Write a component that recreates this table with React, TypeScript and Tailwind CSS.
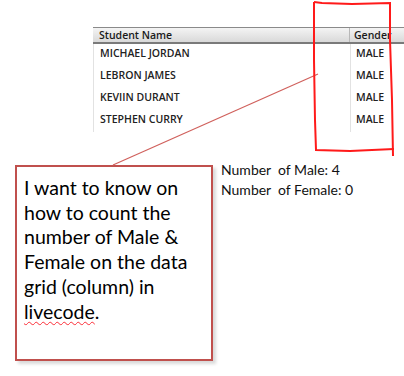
import React from 'react';

const students = [
  { name: 'MICHAEL JORDAN', gender: 'MALE' },
  { name: 'LEBRON JAMES', gender: 'MALE' },
  { name: 'KEVIIN DURANT', gender: 'MALE' },
  { name: 'STEPHEN CURRY', gender: 'MALE' },
];

const gridFont = { fontFamily: '"Open Sans", "DejaVu Sans", sans-serif' };
const noteFont = { fontFamily: 'Lato, "Open Sans", sans-serif' };

export default function App() {
  const males = students.filter(s => s.gender === 'MALE').length;
  const females = students.filter(s => s.gender === 'FEMALE').length;

  return (
    <div className="relative w-[404px] h-[376px] bg-white overflow-hidden">
      {/* data grid */}
      <div className="ml-[93px] mt-[27px] w-[311px]" style={gridFont}>
        <div className="flex h-[17px] border-t border-[#8a8a8a] border-b-2 border-b-[#7a7a7a] bg-gradient-to-b from-[#f4f4f4] to-[#d9d9d9] text-[10.5px] font-semibold text-[#1a1a1a]">
          <div className="w-[257px] pl-[6px] leading-[15px] border-r border-[#b8b8b8]">Student Name</div>
          <div className="flex-1 pl-[4px] leading-[15px]">Gender</div>
        </div>
        <div className="flex border-l border-[#e2e2e2]">
          <div className="w-[256px]">
            {students.map(s => (
              <div key={s.name} className="h-[22px] pl-[6px] leading-[18px] text-[10.5px] font-semibold text-[#222]">{s.name}</div>
            ))}
          </div>
          <div className="pl-[5px] border-l border-[#e2e2e2]">
            {students.map(s => (
              <div key={s.name} className="h-[22px] leading-[18px] text-[10.5px] font-semibold text-[#222]">{s.gender}</div>
            ))}
          </div>
        </div>
      </div>

      {/* callout + counts */}
      <div className="flex mt-[28px]">
        <div
          className="ml-[15px] mt-[5px] w-[198px] h-[196px] border-2 border-[#c0504d] bg-white shadow-[3px_3px_3px_rgba(0,0,0,0.15)] pl-[7px] pr-[4px] pt-[9px] text-[19.5px] leading-[24.7px] text-black"
          style={noteFont}
        >
          I want to know on how to count the number of Male &amp; Female on the data grid (column) in{' '}
          <span className="underline decoration-wavy decoration-red-500 decoration-1 underline-offset-2">livecode</span>.
        </div>
        <div className="ml-[8px] text-[14px] leading-[20px] text-[#111]" style={noteFont}>
          <div>Number&nbsp; of Male: {males}</div>
          <div>Number&nbsp; of Female: {females}</div>
        </div>
      </div>

      {/* hand-drawn annotations */}
      <svg className="absolute inset-0 pointer-events-none" width="404" height="376">
        <line x1="113" y1="165" x2="318" y2="74" stroke="#d0605c" strokeWidth="1.2" />
        <path d="M314 2 L322 3 L352 4 L390 3 L390 40 L392 100 L393 156" fill="none" stroke="#ff1a1a" strokeWidth="2" />
        <path d="M314 2 L314 60 L315 120 L316 150 L350 151 L394 149" fill="none" stroke="#ff1a1a" strokeWidth="2" />
      </svg>
    </div>
  );
}
